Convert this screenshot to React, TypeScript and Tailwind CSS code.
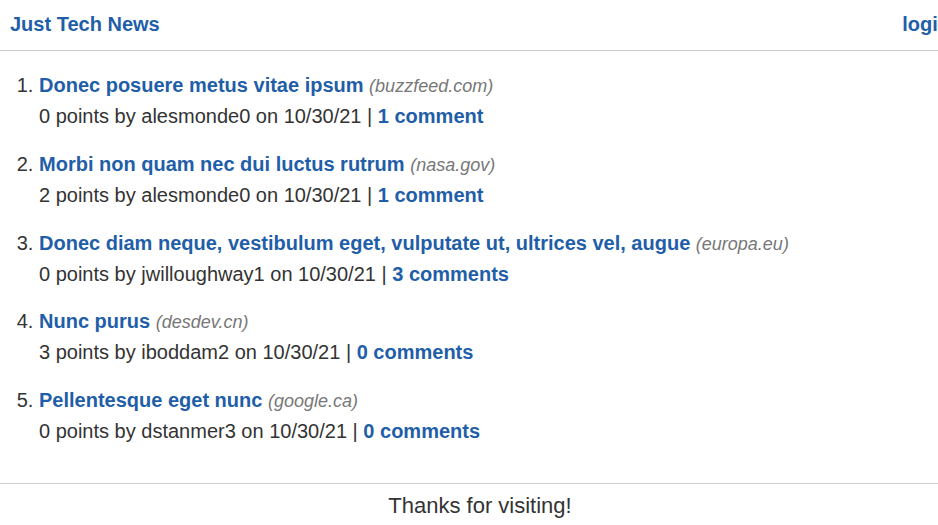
const posts = [
  { title: "Donec posuere metus vitae ipsum", domain: "buzzfeed.com", points: 0, user: "alesmonde0", comments: 1 },
  { title: "Morbi non quam nec dui luctus rutrum", domain: "nasa.gov", points: 2, user: "alesmonde0", comments: 1 },
  { title: "Donec diam neque, vestibulum eget, vulputate ut, ultrices vel, augue", domain: "europa.eu", points: 0, user: "jwilloughway1", comments: 3 },
  { title: "Nunc purus", domain: "desdev.cn", points: 3, user: "iboddam2", comments: 0 },
  { title: "Pellentesque eget nunc", domain: "google.ca", points: 0, user: "dstanmer3", comments: 0 },
];

const App = () => {
  return (
    <div className="min-h-screen overflow-hidden bg-white text-[#333] font-['Liberation_Sans',Arial,sans-serif] text-[20px]">
      {/* page is a bit wider than the window, so login and footer sit off-centre */}
      <div className="w-[calc(100%+22px)]">
        <header className="h-[51px] px-[10px] pb-[2px] flex items-center justify-between border-b border-[#ccc]">
          <a href="#" className="font-bold text-[#1f5ea8]">Just Tech News</a>
          <a href="#" className="font-bold text-[#1f5ea8]">login</a>
        </header>

        <main className="pt-[19px] pb-[19px]">
          <ol className="list-decimal pl-[39px]">
            {posts.map((p, i) => (
              <li key={i} className="mb-[16.75px] leading-[31px]">
                <div className="h-[31px] whitespace-nowrap">
                  <a href="#" className="font-bold text-[#1f5ea8]">{p.title}</a>{" "}
                  <span className="italic text-[#777] text-[18px]">({p.domain})</span>
                </div>
                <div className="h-[31px]">
                  {p.points} points by {p.user} on 10/30/21 |{" "}
                  <a href="#" className="font-bold text-[#1f5ea8]">
                    {p.comments} {p.comments === 1 ? "comment" : "comments"}
                  </a>
                </div>
              </li>
            ))}
          </ol>
        </main>

        <footer className="border-t border-[#ccc] pt-[6px] text-center text-[22px] leading-[31px]">
          Thanks for visiting!
        </footer>
      </div>
    </div>
  );
};

export default App;
